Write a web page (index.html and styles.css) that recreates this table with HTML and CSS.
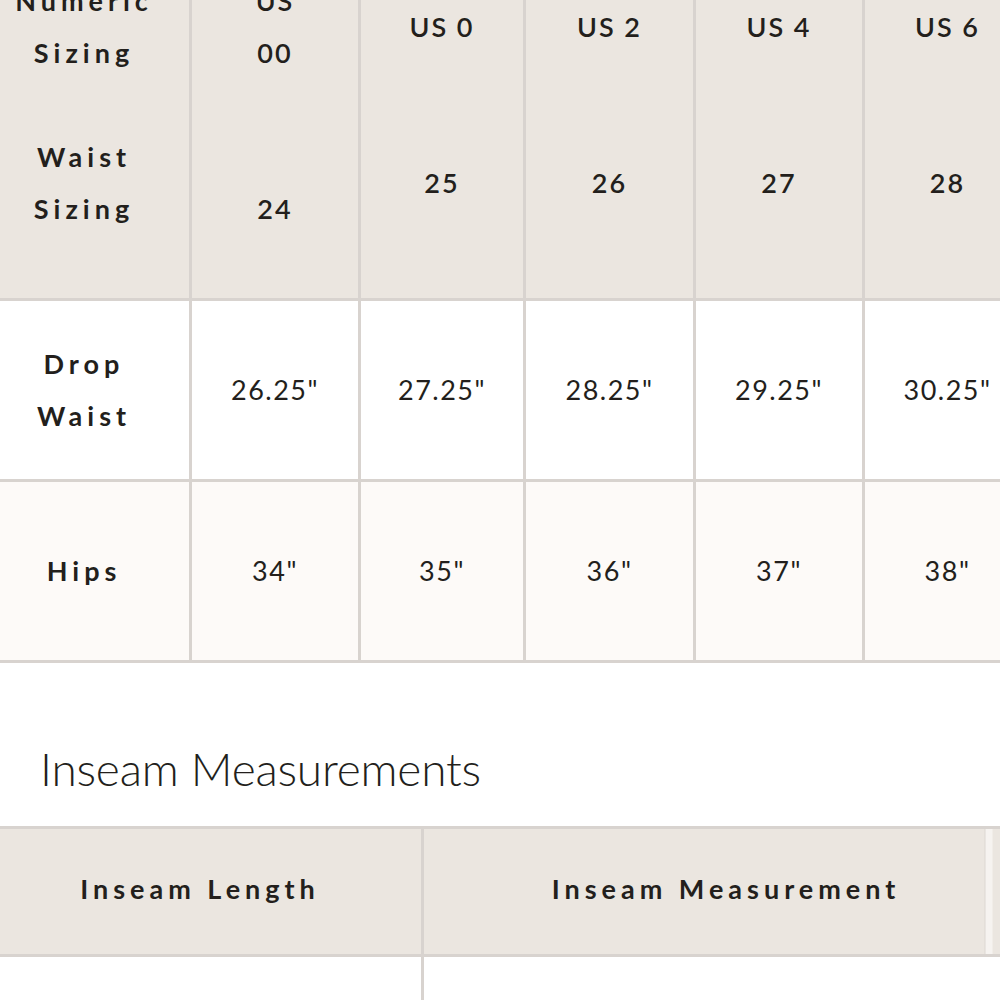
FILE: index.html
```html
<!DOCTYPE html>
<html lang="en">
<head>
<meta charset="utf-8">
<title>Size Chart</title>
<link rel="stylesheet" href="styles.css">
</head>
<body>
<main class="page">
  <table class="chart size-chart">
    <colgroup>
      <col class="c-label">
      <col class="c-a">
      <col class="c-b">
      <col class="c-c">
      <col class="c-d">
      <col class="c-e">
    </colgroup>
    <thead>
      <tr class="row-head">
        <th class="label">Numeric<br>Sizing<br><br>Waist<br>Sizing</th>
        <th class="size">US<br>00<br><br><br>24</th>
        <th class="size">US 0<br><br><br>25</th>
        <th class="size">US 2<br><br><br>26</th>
        <th class="size">US 4<br><br><br>27</th>
        <th class="size">US 6<br><br><br>28</th>
      </tr>
    </thead>
    <tbody>
      <tr class="row-body row-white">
        <th class="label">Drop<br>Waist</th>
        <td class="val">26.25"</td>
        <td class="val">27.25"</td>
        <td class="val">28.25"</td>
        <td class="val">29.25"</td>
        <td class="val">30.25"</td>
      </tr>
      <tr class="row-body row-tint">
        <th class="label">Hips</th>
        <td class="val">34"</td>
        <td class="val">35"</td>
        <td class="val">36"</td>
        <td class="val">37"</td>
        <td class="val">38"</td>
      </tr>
    </tbody>
  </table>

  <h2 class="section-title">Inseam Measurements</h2>

  <table class="chart inseam-chart">
    <colgroup>
      <col class="i-a">
      <col class="i-b">
    </colgroup>
    <thead>
      <tr class="row-ihead">
        <th class="label ilabel-a">Inseam Length</th>
        <th class="label ilabel-b">Inseam Measurement</th>
      </tr>
    </thead>
    <tbody>
      <tr class="row-iblank">
        <td></td>
        <td></td>
      </tr>
    </tbody>
  </table>
</main>
</body>
</html>
```

FILE: styles.css
```css
html, body {
  margin: 0;
  padding: 0;
  background: #ffffff;
  overflow: hidden;
}

.page {
  width: 1000px;
  height: 1000px;
  overflow: hidden;
  font-family: "Lato", "Noto Sans", sans-serif;
  color: #231f1c;
}

.chart {
  border-collapse: collapse;
  table-layout: fixed;
}

.chart th,
.chart td {
  border: 3px solid #d8d3cf;
  padding: 0;
  text-align: center;
  vertical-align: middle;
}

.size-chart {
  margin: -86px 0 0 -24px;
  width: 1054px;
}

.c-label { width: 213px; }
.c-a { width: 169px; }
.c-b { width: 165px; }
.c-c { width: 170px; }
.c-d { width: 169px; }
.c-e { width: 168px; }

.row-head th {
  background: #ebe6e0;
  height: 375px;
  padding-bottom: 6px;
  line-height: 52px;
}

.row-body th,
.row-body td {
  height: 178px;
  line-height: 52px;
}

.row-white th,
.row-white td { background: #ffffff; }

.row-tint th,
.row-tint td { background: #fdfaf8; }

.label {
  font-size: 27px;
  font-weight: 700;
  letter-spacing: 5px;
}

.size {
  font-size: 27px;
  font-weight: 600;
  letter-spacing: 2px;
}

.val {
  font-size: 27px;
  font-weight: 400;
  letter-spacing: 1.5px;
}

.section-title {
  margin: 78px 0 0 40px;
  font-family: "Lato", "Noto Sans", sans-serif;
  font-weight: 300;
  font-size: 46px;
  line-height: 55px;
  letter-spacing: -0.2px;
  color: #231f1c;
}

.inseam-chart {
  margin: 30px 0 0 -24px;
  width: 1052px;
}

.i-a { width: 445px; }
.i-b { width: 607px; }

.row-ihead th {
  background: #ebe6e0;
  height: 119px;
  padding-bottom: 6px;
  line-height: 32px;
}

.ilabel-a { padding-right: 26px; }

.ilabel-b {
  padding-left: 40px;
  background: linear-gradient(to right,
    #ebe6e0 0, #ebe6e0 560px,
    #dcd7d2 560px, #dcd7d2 561px,
    #f6f3f0 561px, #f6f3f0 568px,
    #ebe6e0 568px) !important;
}

.row-iblank td {
  height: 120px;
  background: #ffffff;
}

.row-iblank td:first-child { border-left: none; }
```
